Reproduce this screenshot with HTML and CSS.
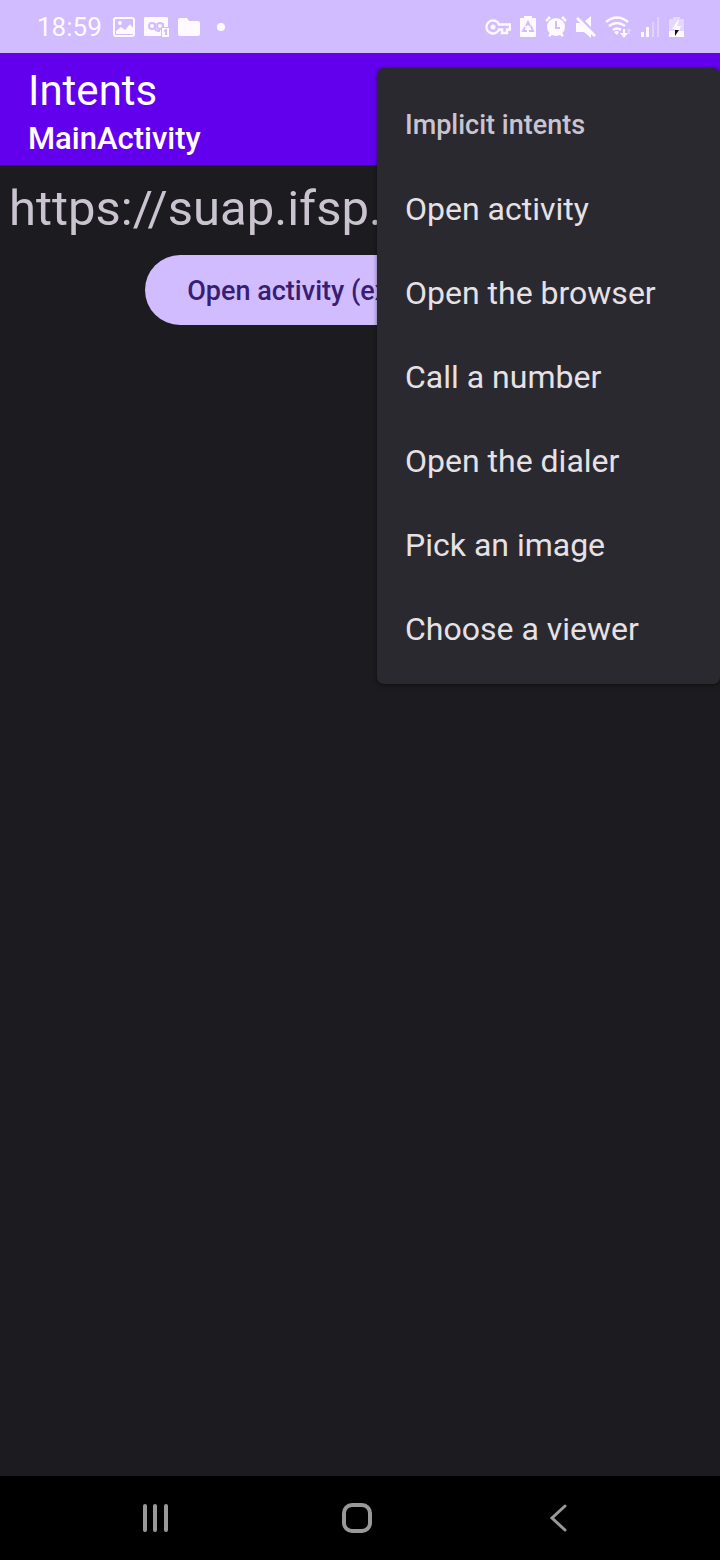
FILE: index.html
```html
<!DOCTYPE html>
<html lang="en">
<head>
<meta charset="utf-8">
<meta name="viewport" content="width=device-width, initial-scale=1">
<title>Intents</title>
<link rel="stylesheet" href="styles.css">
</head>
<body>
<div class="screen">
  <div class="status-bar">
    <div class="status-group">
      <time class="clock">18:59</time>
      <svg viewBox="0 0 22 20" width="22" height="20" aria-hidden="true">
        <rect x="1" y="1" width="20" height="18" rx="2" fill="none" stroke="currentColor" stroke-width="2"/>
        <circle cx="7" cy="6" r="2" fill="currentColor"/>
        <path d="M3 17v-3l5-4 4 3 5-6 3 4v6z" fill="currentColor"/>
      </svg>
      <svg viewBox="0 0 25 20" width="25" height="20" aria-hidden="true">
        <path d="M1 0h22a1 1 0 0 1 1 1v9h-7v9H1a1 1 0 0 1-1-1V1a1 1 0 0 1 1-1z" fill="currentColor"/>
        <g class="cutout"><circle cx="8" cy="9" r="3"/><circle cx="16" cy="9" r="3"/><path d="M11 6v5q0 3 5 3M19 6v4"/></g>
        <rect x="18" y="11" width="7" height="9" fill="currentColor"/>
        <path class="cutout" d="M20 14l2-1v5"/>
      </svg>
      <svg viewBox="0 0 22 20" width="22" height="20" aria-hidden="true">
        <path d="M2 1h7l2 3h9q2 0 2 2v11q0 2-2 2H2q-2 0-2-2V3q0-2 2-2z" fill="currentColor"/>
      </svg>
      <span class="more-dot"></span>
    </div>
    <div class="status-group">
      <svg viewBox="0 0 26 16" width="26" height="16" aria-hidden="true">
        <path d="M8 1.500a6.500 6.500 0 1 0 6 9h3V14h5v-3.500h3v-5H14A6.500 6.500 0 0 0 8 1.500z" fill="none" stroke="currentColor" stroke-width="2.500"/>
        <circle cx="8" cy="8" r="2.500" fill="currentColor"/>
      </svg>
      <svg viewBox="0 0 16 21" width="16" height="21" aria-hidden="true">
        <path d="M4 0h8v2h3q1 0 1 1v17q0 1-1 1H1q-1 0-1-1V3q0-1 1-1h3z" fill="currentColor"/>
        <path class="cutout" d="M6 10l2-4 2 4M11 10l2 5H9M7 15H3l2-4"/>
      </svg>
      <svg class="icon-alarm" viewBox="0 0 22 21" width="22" height="21" aria-hidden="true">
        <circle cx="11" cy="11" r="9" fill="currentColor"/>
        <path d="M1 5l4-4M21 5l-4-4M4 20l3-3M18 20l-3-3" fill="none" stroke="currentColor" stroke-width="2.500"/>
        <path class="cutout" d="M11 5v7h4"/>
      </svg>
      <svg viewBox="0 0 20 22" width="20" height="22" aria-hidden="true">
        <path d="M0 7h4l11 10v5l-7-6H0zM9 5l6-5v11z" fill="currentColor"/>
        <path d="M1 2l18 18" fill="none" stroke="currentColor" stroke-width="3"/>
      </svg>
      <svg viewBox="0 0 27 22" width="27" height="22" aria-hidden="true">
        <g fill="none" stroke="currentColor" stroke-width="2.500"><path d="M1 6q11-9 22 0M4 10q8-6 16 0M8 14q4-3 8 0"/></g>
        <path d="M9 16q3-2 5 0l-2 3z" fill="currentColor"/>
        <path d="M20 13v4h3l-4 5-4-5h3v-4z" fill="currentColor"/>
        <path d="M23 18v-3h-2l3-3 3 3h-2v3z" fill="currentColor" opacity=".35"/>
      </svg>
      <svg viewBox="0 0 19 20" width="19" height="20" aria-hidden="true">
        <path d="M0 15h3v5H0zM5 10h3v10H5z" fill="currentColor"/>
        <path d="M11 5h2v15h-2zM16 0h2v20h-2z" fill="currentColor" opacity=".35"/>
      </svg>
      <svg viewBox="0 0 15 22" width="15" height="22" aria-hidden="true">
        <path d="M4 1h7v2h4v18H0V3h4z" fill="currentColor" opacity=".45"/>
        <path d="M0 15h15v6H0z" fill="currentColor"/>
        <path d="M9 4L3 13h4l-1 2h4l2-5H8l2-6z" fill="currentColor"/>
        <path d="M6 14h4l-4 6z" fill="#111"/>
      </svg>
    </div>
  </div>

  <div class="activity">
    <header class="app-bar">
      <h1 class="app-title">Intents</h1>
      <p class="app-subtitle">MainActivity</p>
    </header>
    <main class="content">
      <p class="url">https://suap.ifsp.edu.br</p>
      <button class="action" type="button">Open activity (explicit intent)</button>
    </main>
    <div class="menu" role="menu" aria-labelledby="menu-title">
      <div class="menu-title" id="menu-title">Implicit intents</div>
      <button class="menu-item" type="button" role="menuitem">Open activity</button>
      <button class="menu-item" type="button" role="menuitem">Open the browser</button>
      <button class="menu-item" type="button" role="menuitem">Call a number</button>
      <button class="menu-item" type="button" role="menuitem">Open the dialer</button>
      <button class="menu-item" type="button" role="menuitem">Pick an image</button>
      <button class="menu-item" type="button" role="menuitem">Choose a viewer</button>
    </div>
  </div>

  <nav class="nav-bar">
    <button class="nav-button" type="button" aria-label="Recent apps">
      <svg viewBox="0 0 30 30" width="30" height="30"><path d="M5 3v24M15 3v24M26 3v24" stroke-width="4"/></svg>
    </button>
    <button class="nav-button" type="button" aria-label="Home">
      <svg viewBox="0 0 30 30" width="30" height="30"><rect x="2" y="2" width="26" height="26" rx="8" stroke-width="4"/></svg>
    </button>
    <button class="nav-button" type="button" aria-label="Back">
      <svg viewBox="0 0 30 30" width="30" height="30"><path d="M21 3L8 15l13 12" stroke-width="3"/></svg>
    </button>
  </nav>
</div>
</body>
</html>
```
FILE: styles.css
```css
* {
  box-sizing: border-box;
}

body {
  margin: 0;
  background: #1c1b1f;
  font-family: Roboto, "Liberation Sans", sans-serif;
}

h1,
p {
  margin: 0;
}

button {
  border: 0;
  font-family: inherit;
}

svg {
  display: block;
  flex: none;
}

.screen {
  display: flex;
  flex-direction: column;
  min-height: 100vh;
  overflow: hidden;
}

.status-bar {
  display: flex;
  align-items: center;
  justify-content: space-between;
  height: 53px;
  padding: 0 36px 0 37px;
  background: #d0bcff;
  color: #fffaff;
}

.status-group {
  display: flex;
  align-items: center;
  gap: 9px;
}

.clock {
  margin-right: 2px;
  font-size: 26px;
  line-height: 30px;
}

.more-dot {
  width: 8px;
  height: 8px;
  margin-left: 8px;
  border-radius: 50%;
  background: currentColor;
}

.cutout {
  fill: none;
  stroke: #d0bcff;
  stroke-width: 2;
}

.activity {
  position: relative;
  display: flex;
  flex: 1;
  flex-direction: column;
}

.app-bar {
  padding: 12px 28px 4px;
  background: #6200ee;
  color: #fff;
}

.app-title {
  font-size: 42px;
  font-weight: 400;
  line-height: 52px;
}

.app-subtitle {
  font-size: 31px;
  font-weight: 500;
  line-height: 44px;
}

.content {
  display: flex;
  flex-direction: column;
  align-items: center;
  gap: 10px;
  padding: 8px 9px;
}

.url {
  align-self: stretch;
  overflow: hidden;
  color: #cac4d0;
  font-size: 49px;
  line-height: 72px;
  white-space: nowrap;
}

.action {
  height: 70px;
  padding: 2px 42px 0;
  border-radius: 35px;
  background: #d0bcff;
  color: #381e72;
  font-size: 27px;
  font-weight: 500;
  white-space: nowrap;
}

.menu {
  position: absolute;
  top: 15px;
  right: 0;
  display: flex;
  flex-direction: column;
  min-width: 343px;
  padding: 14px 0;
  border-radius: 7px;
  background: #2b2930;
  box-shadow: 0 1px 4px rgba(0, 0, 0, 0.5);
}

.menu-title,
.menu-item {
  height: 84px;
  padding: 2px 28px 0;
  line-height: 82px;
  text-align: left;
}

.menu-title {
  color: #cac4d0;
  font-size: 27px;
  font-weight: 500;
}

.menu-item {
  background: none;
  color: #e6e1e5;
  font-size: 32px;
}

.nav-bar {
  display: flex;
  align-items: center;
  justify-content: space-between;
  height: 84px;
  padding: 0 146px 0 140px;
  background: #000;
}

.nav-button {
  padding: 0;
  background: none;
}

.nav-button svg {
  fill: none;
  stroke: #999;
  stroke-linecap: round;
}
```
